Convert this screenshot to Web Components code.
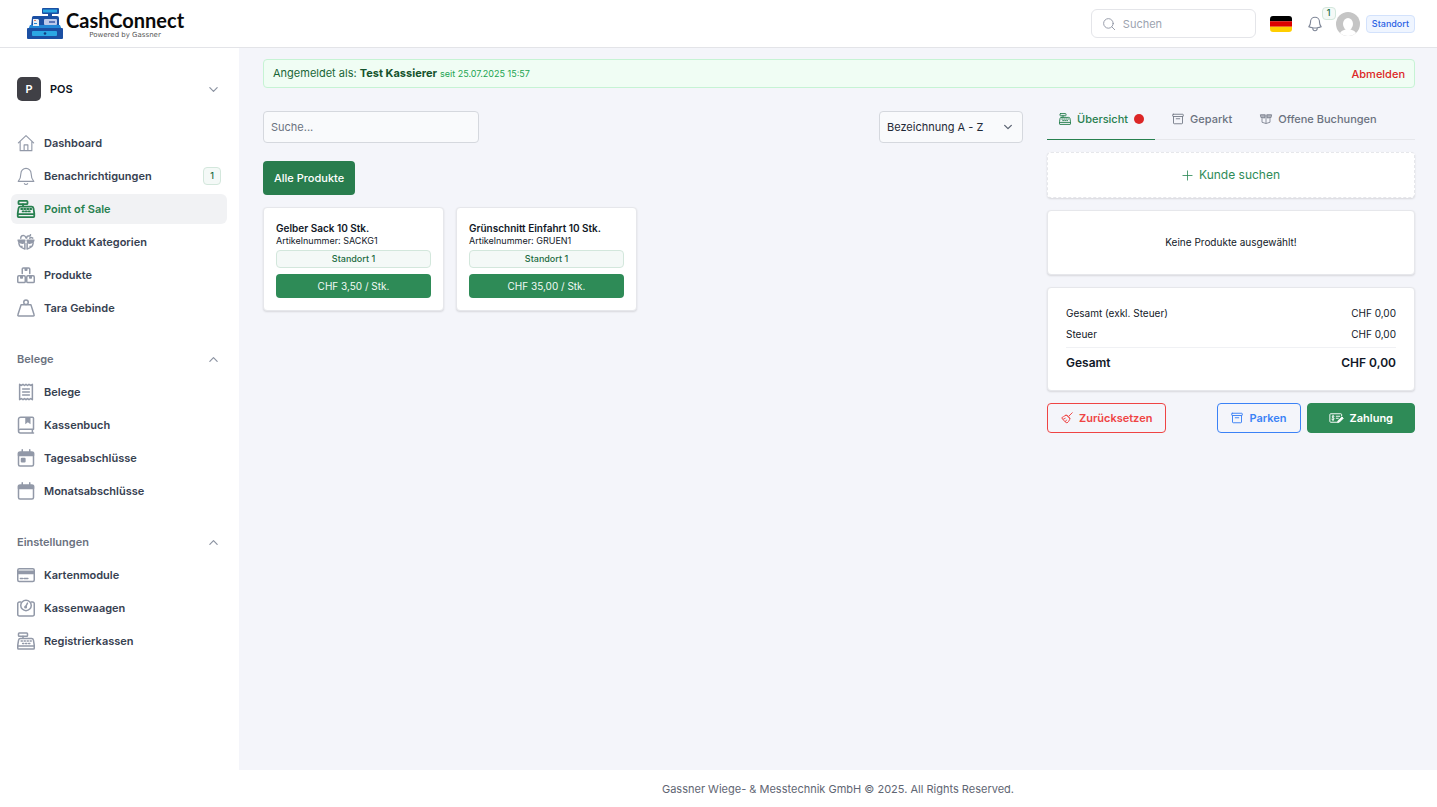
<!DOCTYPE html>
<html lang="de">
<head>
<meta charset="utf-8">
<meta name="viewport" content="width=device-width, initial-scale=1">
<title>CashConnect - Point of Sale</title>
<style>
  body {
    margin: 0;
    background: #f4f5fa;
    color: #111827;
    font-family: Inter, "Liberation Sans", sans-serif;
    font-size: 11px;
    line-height: 16px;
  }
</style>
</head>
<body>
<pos-app></pos-app>

<script>
// Shared by every shadow root
const BASE = `
  *, *::before, *::after { box-sizing: border-box; }
  a { color: inherit; text-decoration: none; }
  button, input, select { font: inherit; color: inherit; margin: 0; }
  button { cursor: pointer; }
  [hidden] { display: none; }
`;

const REGISTER = `
  <rect x="2" y="1.2" width="12" height="4.300" rx="1"/>
  <path d="M8 5.500v3.300M4.500 8.800h15q2 0 2.400 2l1.100 6.700v4.300a1 1 0 0 1-1 1H2a1 1 0 0 1-1-1v-4.300l1.100-6.700q.4-2 2.400-2zM1.400 18.800h21.200"/>
  <path stroke-dasharray="1.600 2.400" d="M5.500 12h13.500M7.500 15.200h10"/>`;

const ICONS = {
  home: '<path d="M1.800 11.800 12 2.200l10.200 9.600M4.200 9.800v12.400h15.600V9.800M9.500 22v-7.500h5V22"/>',
  bell: '<path d="M12 1.800a6.800 6.800 0 0 0-6.800 6.800c0 5.800-1.700 8.400-3.600 10.600h20.800c-1.900-2.200-3.600-4.800-3.600-10.600A6.800 6.800 0 0 0 12 1.800zM9.800 22.200c1 1.400 3.400 1.400 4.400 0"/>',
  bellSmall: '<path d="M14.857 17.082a23.848 23.848 0 0 0 5.454-1.310A8.967 8.967 0 0 1 18 9.750V9A6 6 0 0 0 6 9v.750a8.967 8.967 0 0 1-2.312 6.022c1.733.640 3.560 1.085 5.455 1.310m5.714 0a24.255 24.255 0 0 1-5.714 0m5.714 0a3 3 0 1 1-5.714 0"/>',
  register: REGISTER,
  category: `
    <path d="M2.500 14c.5 3.500 3.500 6 8 7.300v-7.800M21.500 14c-.5 3.500-3.500 6-8 7.300v-7.800M6.500 17.800v1M17.500 17.800v1"/>
    <path fill="currentColor" d="M1.500 9.500h9l-.8 3-2.200 1.300-5-1.300zM22.500 9.500h-9l.8 3 2.200 1.300 5-1.300z"/>
    <path d="M5 7c0-2.800 2-4.300 4.500-3.500 1.400.4 2 1.500 2.500 3M13 6.500c0-2 1-3 2.500-2.500 1.800.5 2.400-.4 2.500-1.800M17 6.800c1-1 2.500-1 4 0"/>`,
  boxes: '<rect x="1" y="13" width="10" height="9" rx="1.500"/><rect x="13" y="13" width="10" height="9" rx="1.500"/><path d="M7 10V4a1.500 1.500 0 0 1 1.500-1.500h7A1.500 1.500 0 0 1 17 4v6M5 13v3h2v-3M17 13v3h2v-3M11 2.500v3h2v-3"/>',
  weight: '<circle cx="12" cy="4.200" r="3"/><path d="M5.500 7.500h13L22.800 21a1.200 1.200 0 0 1-1.100 1.700H2.300A1.200 1.200 0 0 1 1.200 21z"/>',
  receipt: '<path d="M3.500 1.800 5.800 3.300 8 1.800l2 1.500 2-1.500 2 1.500 2-1.500 2.200 1.500 2.300-1.500v20.400l-2.300-1.500-2.200 1.500-2-1.500-2 1.500-2-1.500-2 1.500-2.200-1.500-2.300 1.500zM7.500 8h9M7.500 12h9M7.500 16h9"/>',
  book: '<path d="M22 17.500V3a1.500 1.500 0 0 0-1.500-1.500H5A3 3 0 0 0 2 4.500V20a2.500 2.500 0 0 0 2.500 2.500H22M2.500 19a2.500 2.500 0 0 1 2-1.500H22M20.500 17.500v5"/><path fill="currentColor" stroke="none" d="M11 2h7v9l-3.500-2.600L11 11z"/>',
  calendarDay: '<rect x="2" y="4" width="20" height="18.500" rx="2"/><path d="M7 1v3M17 1v3"/><path fill="currentColor" d="M2 5h20v3.500H2z"/><rect fill="currentColor" x="6" y="12.500" width="4.500" height="4.500" rx=".5"/>',
  calendar: '<rect x="2" y="4" width="20" height="18.500" rx="2"/><path d="M7 1v3M17 1v3"/><path fill="currentColor" d="M2 5h20v3.500H2z"/>',
  card: '<rect x="1" y="3.500" width="22" height="17" rx="2"/><path fill="currentColor" d="M1 7h22v3H1z"/><path d="M4.500 16.500h3M9.500 16.500h5"/>',
  scale: '<path d="M5 4H3.200A2.200 2.200 0 0 0 1 6.200v14.300a2.200 2.200 0 0 0 2.200 2.200h17.600a2.200 2.200 0 0 0 2.200-2.200V6.200A2.200 2.200 0 0 0 20.800 4H19"/><circle cx="12" cy="8.500" r="7"/><path d="m11.200 11 2.800-5.500"/><circle cx="11.500" cy="10.500" r="1"/>',
  archive: '<rect x="1.500" y="2.500" width="21" height="4.500" rx="1"/><path d="M3 7v13a1.500 1.500 0 0 0 1.500 1.500h15A1.500 1.500 0 0 0 21 20V7M8.500 11.500h7"/>',
  openBox: '<path d="M4 11v7.500l8 2.500 8-2.500V11M12 6v14"/><path fill="currentColor" fill-opacity=".5" d="M1.500 3.500h9L9.500 10l-7-1zM22.500 3.500h-9l1 6.500 7-1z"/>',
  broom: '<path d="m22.500 1.500-6 6M9.500 6.500c3-1.500 9.300 4.700 8 8-1 3-3 5.500-5.500 7.500C8 20 4 16 1.500 11.500c2.500-1.500 5-3.500 8-5zM11 6.500l7 7M4.500 14.500l4-2M9 19l2-3"/>',
  payment: '<path d="M15 20.500H3A1.800 1.800 0 0 1 1.200 18.700V5.300A1.800 1.800 0 0 1 3 3.500h20a1.800 1.800 0 0 1 1.800 1.800V8M14 8.500h7M14 12.500h4M9.500 8.500c-3.500-1.500-5 1.500-2.700 2.800 2.500 1 3.700 1.700 2.700 3.200-1 1.300-3 1-4.300.2M7.500 6.500v11"/><path fill="currentColor" d="m18 17 7.500-7 2.500 2.500-7.500 7.500-3.500 1z"/>',
  search: '<circle cx="11" cy="11" r="8.200"/><path d="m17 17 4.800 4.800"/>',
  plus: '<path d="M12 2v20M2 12h20"/>',
  down: '<path d="m4 8 8 8 8-8"/>',
  up: '<path d="m4 16 8-8 8 8"/>'
};

class PosIcon extends HTMLElement {
  connectedCallback() {
    const name = this.getAttribute('name');
    const box = name === 'payment' ? '0 0 29 24' : '0 0 24 24';
    this.attachShadow({ mode: 'open' });
    this.shadowRoot.innerHTML = `
      <style>
        :host { display: inline-flex; flex: none; width: 18px; height: 18px; }
        svg { width: 100%; height: 100%; display: block; overflow: visible; }
      </style>
      <svg viewBox="${box}" fill="none" stroke="currentColor" stroke-width="${this.getAttribute('weight') || 1.5}"
        stroke-linecap="round" stroke-linejoin="round" aria-hidden="true">${ICONS[name]}</svg>
    `;
  }
}

class PosLogo extends HTMLElement {
  connectedCallback() {
    this.attachShadow({ mode: 'open' });
    this.shadowRoot.innerHTML = `
      <style>
        ${BASE}
        :host { display: block; color: #0a0a0a; }
        a { display: flex; align-items: center; gap: 3px; }
        svg { width: 36px; height: 32px; display: block; }
        .words { display: flex; flex-direction: column; align-items: center; }
        .name { font: bold 20px/22px Lato, sans-serif; }
        .claim { font: 7px/8px "DejaVu Sans", sans-serif; color: #555; }
      </style>
      <a href="#">
        <svg viewBox="0 0 36 32" aria-hidden="true">
          <path fill="#1b4fa3" d="M21 5h4v5h-4zM5 9.500Q5 8 6.500 8H30q2 0 2 2v9H4z"/>
          <rect x="15" y="0" width="17" height="6" rx="1" fill="#1b4fa3"/>
          <rect x="16" y="1.500" width="14" height="3" fill="#2ba7e4"/>
          <path fill="#2387d6" d="M3 17h30l2 5H1z"/>
          <rect x="0" y="20" width="36" height="11" rx="1" fill="#1b4fa3"/>
          <rect x="5" y="23" width="25" height="5" rx="1" fill="#2ba7e4"/>
          <circle cx="18" cy="25.500" r="1.300" fill="#123c80"/>
          <rect x="17" y="11" width="13" height="6" rx="1" fill="#bcc9ea"/>
          <path stroke="#5a75b8" d="M22 14h6" stroke-width="2"/>
          <path fill="#e8edf5" d="M6 11h5l1 1v6H6z"/>
          <path stroke="#e08060" d="M7 12.500h2"/><path stroke="#2387d6" d="M7 15.500h3"/>
        </svg>
        <span class="words"><span class="name">CashConnect</span><span class="claim">Powered by Gassner</span></span>
      </a>
    `;
  }
}

class PosBadge extends HTMLElement {
  connectedCallback() {
    this.attachShadow({ mode: 'open' });
    this.shadowRoot.innerHTML = `
      <style>
        ${BASE}
        :host {
          display: flex; align-items: center; justify-content: center;
          height: 18px; padding: 0 6px;
          border: 1px solid #d3e7dc; border-radius: 4px;
          background: #f4f9f7; color: #1c6b3f;
          font-size: 9px; line-height: 12px; font-weight: 500;
        }
        :host([tone="blue"]) { border-color: #d3e2fc; background: #eff5ff; color: #2c62e4; }
      </style>
      <slot></slot>
    `;
  }
}

class PosHeader extends HTMLElement {
  connectedCallback() {
    this.attachShadow({ mode: 'open' });
    this.shadowRoot.innerHTML = `
      <style>
        ${BASE}
        :host { display: block; background: #fff; border-bottom: 1px solid #e3e4e8; }
        header {
          display: flex; align-items: center; justify-content: space-between;
          height: 47px; padding: 0 22px 0 27px;
        }
        .tools { display: flex; align-items: center; }
        .search {
          display: flex; align-items: center; gap: 7px;
          width: 165px; height: 29px; padding: 0 10px;
          border: 1px solid #e4e5e9; border-radius: 6px;
          color: #8b91a0;
        }
        .search pos-icon { width: 14px; height: 14px; }
        .search input { flex: 1; min-width: 0; padding: 0; border: 0; outline: 0; background: none; color: #111827; }
        .search input::placeholder { color: #9ca3af; opacity: 1; }
        button { display: flex; padding: 0; border: 0; background: none; color: #7e8697; }
        .flag { margin-left: 14px; }
        .flag svg { width: 22px; height: 16px; border-radius: 3px; }
        .bell { position: relative; margin-left: 14px; }
        .bell pos-badge { position: absolute; left: 16px; top: -8px; height: 13px; padding: 0 4px; }
        .user { margin-left: 12px; }
        .user svg { width: 24px; height: 24px; }
        .place { margin-left: 6px; padding: 0 5px; }
      </style>
      <header>
        <pos-logo></pos-logo>
        <div class="tools">
          <label class="search">
            <pos-icon name="search"></pos-icon>
            <input type="search" placeholder="Suchen" aria-label="Suchen">
          </label>
          <button class="flag" aria-label="Sprache">
            <svg viewBox="0 0 22 16"><path d="M0 0h22v5.300H0z"/><path fill="#d00" d="M0 5.300h22v5.400H0z"/><path fill="#ffce00" d="M0 10.700h22V16H0z"/></svg>
          </button>
          <button class="bell" aria-label="Benachrichtigungen">
            <pos-icon name="bellSmall"></pos-icon>
            <pos-badge>1</pos-badge>
          </button>
          <button class="user" aria-label="Benutzer">
            <svg viewBox="0 0 24 24">
              <clipPath id="round"><circle cx="12" cy="12" r="12"/></clipPath>
              <g clip-path="url(#round)">
                <path fill="#c5c5c5" d="M0 0h24v24H0z"/>
                <ellipse cx="12" cy="12" rx="5" ry="6" fill="#fff"/>
                <path fill="#fff" d="M3.500 24c0-4 2-5.500 6-6.500v-3h5v3c4 1 6 2.500 6 6.500z"/>
              </g>
            </svg>
          </button>
          <pos-badge class="place" tone="blue">Standort</pos-badge>
        </div>
      </header>
    `;
  }
}

class NavItem extends HTMLElement {
  connectedCallback() {
    const active = this.hasAttribute('active');
    this.attachShadow({ mode: 'open' });
    this.shadowRoot.innerHTML = `
      <style>
        ${BASE}
        :host { display: block; }
        a {
          display: flex; align-items: center; gap: 9px;
          height: 30px; padding: 0 6px;
          border-radius: 6px;
          color: #374151; font-weight: 600;
        }
        pos-icon { color: #9299a8; }
        .label { flex: 1; }
        :host([active]) a { background: #f1f2f4; color: #27804f; }
        :host([active]) pos-icon { color: #27804f; }
      </style>
      <a href="#" ${active ? 'aria-current="page"' : ''}>
        <pos-icon name="${this.getAttribute('icon')}" weight="${this.getAttribute('weight') || (active ? 2.4 : 2)}"></pos-icon>
        <span class="label"><slot></slot></span>
        <slot name="badge"></slot>
      </a>
    `;
  }
}

class NavGroup extends HTMLElement {
  connectedCallback() {
    const label = this.getAttribute('label');
    this.attachShadow({ mode: 'open' });
    this.shadowRoot.innerHTML = `
      <style>
        ${BASE}
        :host { display: flex; flex-direction: column; gap: 3px; }
        button {
          display: flex; align-items: center; justify-content: space-between;
          height: 30px; padding: 0 8px 0 6px;
          border: 0; background: none;
          color: #6b7280; font-weight: 600;
        }
        pos-icon { width: 11px; height: 11px; color: #8b92a1; }
      </style>
      ${label ? `<button aria-expanded="true">${label}<pos-icon name="up" weight="2.600"></pos-icon></button>` : ''}
      <slot></slot>
    `;
    const button = this.shadowRoot.querySelector('button');
    if (button) {
      button.addEventListener('click', () => {
        const slot = this.shadowRoot.querySelector('slot');
        slot.hidden = !slot.hidden;
        button.setAttribute('aria-expanded', String(!slot.hidden));
      });
    }
  }
}

class PosSidebar extends HTMLElement {
  connectedCallback() {
    this.attachShadow({ mode: 'open' });
    this.shadowRoot.innerHTML = `
      <style>
        ${BASE}
        :host { display: block; background: #fff; padding: 29px 12px 0 11px; }
        .tenant {
          display: flex; align-items: center; gap: 9px;
          width: 100%; height: 24px; padding: 0 8px 0 6px; margin-bottom: 27px;
          border: 0; background: none; color: #0b1220; font-weight: 600; text-align: left;
        }
        .letter {
          display: flex; align-items: center; justify-content: center;
          width: 24px; height: 24px; border-radius: 5px;
          background: #404046; color: #fff;
        }
        .tenant .label { flex: 1; }
        .tenant pos-icon { width: 11px; height: 11px; color: #8b92a1; }
        nav { display: flex; flex-direction: column; gap: 21px; }
      </style>
      <button class="tenant">
        <span class="letter">P</span><span class="label">POS</span>
        <pos-icon name="down" weight="2.600"></pos-icon>
      </button>
      <nav>
        <nav-group>
          <nav-item icon="home" weight="1.500">Dashboard</nav-item>
          <nav-item icon="bell" weight="1.500">Benachrichtigungen<pos-badge slot="badge">1</pos-badge></nav-item>
          <nav-item icon="register" active>Point of Sale</nav-item>
          <nav-item icon="category">Produkt Kategorien</nav-item>
          <nav-item icon="boxes">Produkte</nav-item>
          <nav-item icon="weight">Tara Gebinde</nav-item>
        </nav-group>
        <nav-group label="Belege">
          <nav-item icon="receipt">Belege</nav-item>
          <nav-item icon="book">Kassenbuch</nav-item>
          <nav-item icon="calendarDay">Tagesabschlüsse</nav-item>
          <nav-item icon="calendar">Monatsabschlüsse</nav-item>
        </nav-group>
        <nav-group label="Einstellungen">
          <nav-item icon="card">Kartenmodule</nav-item>
          <nav-item icon="scale">Kassenwaagen</nav-item>
          <nav-item icon="register">Registrierkassen</nav-item>
        </nav-group>
      </nav>
    `;
  }
}

class SessionBanner extends HTMLElement {
  connectedCallback() {
    this.attachShadow({ mode: 'open' });
    this.shadowRoot.innerHTML = `
      <style>
        ${BASE}
        :host {
          display: flex; align-items: center; justify-content: space-between;
          height: 29px; padding: 0 9px;
          border: 1px solid #c6f3d4; border-radius: 4px;
          background: #f0fdf4; color: #1a6637;
        }
        strong { font-weight: 700; color: #14532d; }
        small { font-size: 9px; color: #21a452; }
        button { padding: 0; border: 0; background: none; color: #dc2626; font-weight: 500; }
      </style>
      <span>Angemeldet als: <strong>Test Kassierer</strong> <small>seit 25.07.2025 15:57</small></span>
      <button>Abmelden</button>
    `;
  }
}

class ProductCard extends HTMLElement {
  connectedCallback() {
    this.attachShadow({ mode: 'open' });
    this.shadowRoot.innerHTML = `
      <style>
        ${BASE}
        :host {
          display: flex; flex-direction: column;
          padding: 12px; border: 1px solid #e6e7eb; border-radius: 4px;
          background: #fff; box-shadow: 0 1px 2px rgba(0, 0, 0, .12);
        }
        h3 { margin: 0; font-size: 10px; line-height: 16px; font-weight: 600; }
        p { margin: 0 0 4px; font-size: 9px; line-height: 10px; }
        button {
          height: 24px; margin-top: 6px; padding: 0;
          border: 0; border-radius: 4px;
          background: #2e8b57; color: #f2faf5; font-size: 10px;
        }
      </style>
      <h3><slot></slot></h3>
      <p>Artikelnummer: ${this.getAttribute('sku')}</p>
      <pos-badge>Standort 1</pos-badge>
      <button>${this.getAttribute('price')}</button>
    `;
  }
}

class ProductCatalog extends HTMLElement {
  connectedCallback() {
    this.attachShadow({ mode: 'open' });
    this.shadowRoot.innerHTML = `
      <style>
        ${BASE}
        :host { display: block; }
        .filters { display: flex; justify-content: space-between; margin-bottom: 18px; }
        input, .sort {
          height: 32px; border: 1px solid #d5d8de; border-radius: 4px; background: #f9fafc;
        }
        input { width: 216px; padding: 0 7px; }
        input::placeholder { color: #6b7280; opacity: 1; }
        .sort { display: grid; width: 144px; align-items: center; color: #1f2937; }
        .sort > * { grid-area: 1 / 1; }
        .sort pos-icon { width: 10px; height: 10px; justify-self: end; margin-right: 9px; color: #596170; pointer-events: none; }
        select { width: 100%; height: 30px; padding: 0 7px; border: 0; background: none; appearance: none; }
        .all {
          height: 34px; padding: 0 11px; margin-bottom: 12px;
          border: 0; border-radius: 4px; background: #297d4e; color: #fff; font-weight: 500;
        }
        .grid { display: grid; grid-template-columns: repeat(4, 1fr); gap: 12px; }
      </style>
      <div class="filters">
        <input type="text" placeholder="Suche..." aria-label="Suche">
        <div class="sort">
          <select aria-label="Sortierung"><option>Bezeichnung A - Z</option><option>Bezeichnung Z - A</option></select>
          <pos-icon name="down" weight="3"></pos-icon>
        </div>
      </div>
      <button class="all">Alle Produkte</button>
      <div class="grid">
        <product-card sku="SACKG1" price="CHF 3,50 / Stk.">Gelber Sack 10 Stk.</product-card>
        <product-card sku="GRUEN1" price="CHF 35,00 / Stk.">Grünschnitt Einfahrt 10 Stk.</product-card>
      </div>
    `;
  }
}

class CartTabs extends HTMLElement {
  connectedCallback() {
    this.attachShadow({ mode: 'open' });
    this.shadowRoot.innerHTML = `
      <style>
        ${BASE}
        :host { display: flex; gap: 5px; height: 29px; border-bottom: 1px solid #e6e7eb; }
        button {
          display: flex; align-items: flex-start; gap: 6px;
          height: 29px; padding: 0 11px 0 12px; border: 0; border-bottom: 1px solid transparent;
          background: none; color: #6b7280; font-weight: 500; white-space: nowrap;
        }
        pos-icon { width: 12px; height: 12px; margin-top: 2px; }
        button[aria-selected="true"] { color: #27804f; border-bottom-color: #27804f; }
        .dot { width: 10px; height: 10px; margin-top: 3px; border-radius: 50%; background: #dc2626; }
      </style>
      <button role="tab" aria-selected="true"><pos-icon name="register" weight="1.900"></pos-icon>Übersicht<span class="dot"></span></button>
      <button role="tab" aria-selected="false"><pos-icon name="archive" weight="1.700"></pos-icon>Geparkt</button>
      <button role="tab" aria-selected="false"><pos-icon name="openBox" weight="1.500"></pos-icon>Offene Buchungen</button>
    `;
  }
}

class CartPanel extends HTMLElement {
  connectedCallback() {
    this.attachShadow({ mode: 'open' });
    this.shadowRoot.innerHTML = `
      <style>
        ${BASE}
        :host { display: flex; flex-direction: column; gap: 12px; }
        .card {
          border: 1px solid #e6e7eb; border-radius: 4px;
          background: #fff; box-shadow: 0 1px 2px rgba(0, 0, 0, .12);
        }
        .customer {
          display: flex; align-items: center; justify-content: center; gap: 6px;
          height: 46px; border-style: dashed; color: #2e8b57; font-size: 12px;
        }
        .customer pos-icon { width: 11px; height: 11px; }
        .empty { padding: 24px; font-size: 10px; line-height: 15px; text-align: center; }
        .totals { margin: 0; padding: 17px 18px 18px; font-size: 10px; }
        .totals div { display: flex; justify-content: space-between; }
        .totals div + div { margin-top: 5px; }
        .totals .sum {
          margin-top: 5px; padding-top: 6px; border-top: 1px solid #f0f1f4;
          font-size: 12px; line-height: 18px; font-weight: 600;
        }
        dt, dd { margin: 0; }
        .actions { display: flex; gap: 6px; }
        .actions button {
          display: flex; align-items: center; justify-content: center; gap: 6px;
          height: 30px; padding: 0 13px; border: 1px solid; border-radius: 4px;
          background: none; font-weight: 600;
        }
        .actions pos-icon { width: 12px; height: 12px; }
        .reset { margin-right: auto; color: #ef4444; }
        .park { color: #3b82f6; }
        .actions .pay { padding: 0 21px; border-color: #2e8b57; background: #2e8b57; color: #fff; }
        .actions .pay pos-icon { width: 15px; }
      </style>
      <cart-tabs role="tablist"></cart-tabs>
      <button class="card customer"><pos-icon name="plus" weight="1.800"></pos-icon>Kunde suchen</button>
      <div class="card empty">Keine Produkte ausgewählt!</div>
      <dl class="card totals">
        <div><dt>Gesamt (exkl. Steuer)</dt><dd>CHF 0,00</dd></div>
        <div><dt>Steuer</dt><dd>CHF 0,00</dd></div>
        <div class="sum"><dt>Gesamt</dt><dd>CHF 0,00</dd></div>
      </dl>
      <div class="actions">
        <button class="reset"><pos-icon name="broom" weight="1.900"></pos-icon>Zurücksetzen</button>
        <button class="park"><pos-icon name="archive" weight="1.900"></pos-icon>Parken</button>
        <button class="pay"><pos-icon name="payment" weight="1.900"></pos-icon>Zahlung</button>
      </div>
    `;
  }
}

class PosApp extends HTMLElement {
  connectedCallback() {
    this.attachShadow({ mode: 'open' });
    this.shadowRoot.innerHTML = `
      <style>
        ${BASE}
        :host { display: flex; flex-direction: column; min-height: 100vh; }
        .body { flex: 1; display: flex; }
        pos-sidebar { flex: none; width: 239px; }
        .page { flex: 1; min-width: 0; display: flex; flex-direction: column; }
        main { flex: 1; padding: 11px 22px 24px 24px; }
        .columns { display: grid; grid-template-columns: repeat(3, 1fr); gap: 24px; margin-top: 23px; }
        product-catalog { grid-column: span 2; }
        footer { padding: 11px 11px 10px; background: #fff; color: #5f6673; text-align: center; }
      </style>
      <pos-header></pos-header>
      <div class="body">
        <pos-sidebar></pos-sidebar>
        <div class="page">
          <main>
            <session-banner></session-banner>
            <div class="columns">
              <product-catalog></product-catalog>
              <cart-panel></cart-panel>
            </div>
          </main>
          <footer>Gassner Wiege- &amp; Messtechnik GmbH © 2025. All Rights Reserved.</footer>
        </div>
      </div>
    `;
  }
}

customElements.define('pos-icon', PosIcon);
customElements.define('pos-logo', PosLogo);
customElements.define('pos-badge', PosBadge);
customElements.define('pos-header', PosHeader);
customElements.define('nav-item', NavItem);
customElements.define('nav-group', NavGroup);
customElements.define('pos-sidebar', PosSidebar);
customElements.define('session-banner', SessionBanner);
customElements.define('product-card', ProductCard);
customElements.define('product-catalog', ProductCatalog);
customElements.define('cart-tabs', CartTabs);
customElements.define('cart-panel', CartPanel);
customElements.define('pos-app', PosApp);
</script>
</body>
</html>
